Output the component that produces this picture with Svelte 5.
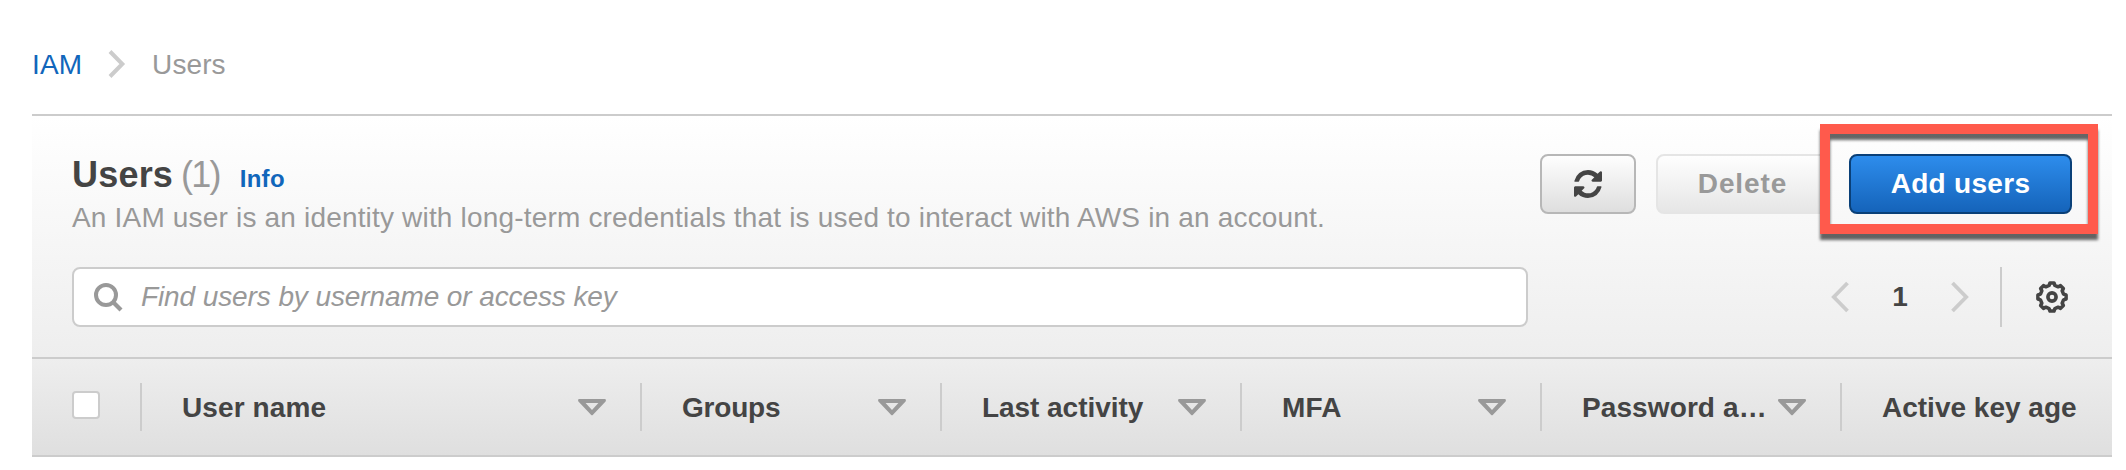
<script>
  const columns = [
    { label: 'User name', width: 500, sortable: true, spacing: 0.1 },
    { label: 'Groups', width: 300, sortable: true, spacing: -0.2 },
    { label: 'Last activity', width: 300, sortable: true, spacing: -0.05 },
    { label: 'MFA', width: 300, sortable: true, spacing: 0.2 },
    { label: 'Password a…', width: 300, sortable: true, spacing: 0.1 },
    { label: 'Active key age', width: 272, sortable: false, spacing: 0 }
  ];

  // Eight-toothed gear outline centred on the origin.
  const gear = Array.from({ length: 8 }, (_, k) =>
    [[-14, 11.9], [-8, 14.2], [8, 14.2], [14, 11.9]].map(([offset, radius]) => {
      const a = ((k * 45 + offset) * Math.PI) / 180;
      return `${(radius * Math.sin(a)).toFixed(2)},${(-radius * Math.cos(a)).toFixed(2)}`;
    }).join(' ')
  ).join(' ');
</script>

<nav class="crumbs">
  <a href="#iam">IAM</a>
  <svg width="18" height="30" viewBox="0 0 18 30"><path d="M2 2.5 14.3 15 2 27.5" fill="none" stroke="#ccc" stroke-width="4" /></svg>
  <span>Users</span>
</nav>

<section class="panel">
  <header class="top">
    <div class="title-row">
      <div class="titles">
        <h1><span class="name">Users</span><span class="count">(1)</span><a class="info" href="#info">Info</a></h1>
        <p>An IAM user is an identity with long-term credentials that is used to interact with AWS in an account.</p>
      </div>
      <div class="actions">
        <button class="btn refresh" aria-label="Refresh">
          <svg width="28" height="28" viewBox="128 128 1536 1536"><path fill="#444" d="M1639 1056q0 5-1 7-64 268-268 434.5t-478 166.5q-146 0-282.5-55t-243.5-157l-129 129q-19 19-45 19t-45-19-19-45v-448q0-26 19-45t45-19h448q26 0 45 19t19 45-19 45l-137 137q71 66 161 102t187 36q134 0 250-65t186-179q11-17 53-117 8-23 30-23h192q13 0 22.5 9.5t9.5 22.5zm25-800v448q0 26-19 45t-45 19h-448q-26 0-45-19t-19-45 19-45l138-138q-148-137-349-137-134 0-250 65t-186 179q-11 17-53 117-8 23-30 23h-199q-13 0-22.5-9.5t-9.5-22.5v-7q65-268 270-434.5t480-166.5q146 0 284 55.5t245 156.5l130-129q19-19 45-19t45 19 19 45z" /></svg>
        </button>
        <button class="btn delete" disabled>Delete</button>
        <div class="highlighted">
          <button class="btn primary">Add users</button>
          <div class="frame"></div>
        </div>
      </div>
    </div>

    <div class="filter-row">
      <div class="search">
        <svg width="32" height="32" viewBox="0 0 32 32" fill="none" stroke="#999"><circle cx="14" cy="14" r="10" stroke-width="4" /><path d="M20.5 20.5 29 29" stroke-width="4.2" /></svg>
        <span>Find users by username or access key</span>
      </div>
      <div class="pager">
        <svg width="18" height="32" viewBox="0 0 18 32"><path d="M16.5 2 2.8 16 16.5 30" fill="none" stroke="#ccc" stroke-width="3.8" /></svg>
        <span class="page">1</span>
        <svg width="18" height="32" viewBox="0 0 18 32"><path d="M1.5 2 15.2 16 1.5 30" fill="none" stroke="#ccc" stroke-width="3.8" /></svg>
        <i class="rule"></i>
        <svg width="32" height="32" viewBox="-16 -16 32 32" fill="none" stroke="#444" stroke-width="3.6" stroke-linejoin="round"><polygon points={gear} /><circle r="4.1" /></svg>
      </div>
    </div>
  </header>

  <div class="columns">
    <div class="select"><span class="checkbox"></span></div>
    {#each columns as column}
      <div class="column" style="width:{column.width}px">
        <span style="letter-spacing:{column.spacing}px">{column.label}</span>
        {#if column.sortable}
          <svg width="28" height="17" viewBox="0 0 28 17"><path fill="#999" fill-rule="evenodd" d="M.8 0H27.2Q28.6 1 27.6 2.4L15 15.8Q14 16.8 13 15.8L.4 2.4Q-.6 1 .8 0ZM7.6 4 14 11 20.4 4Z" /></svg>
        {/if}
      </div>
    {/each}
  </div>
</section>

<style>
  :global(body) {
    margin: 0;
    background: #fff;
    color: #444;
    font: 28px/36px "Liberation Sans", Arial, sans-serif;
  }
  svg { display: block; flex: none; overflow: visible; }
  a { color: #1166bb; text-decoration: none; }

  .crumbs {
    display: flex;
    align-items: center;
    box-sizing: border-box;
    height: 114px;
    padding: 14px 0 0 32px;
    letter-spacing: 0.1px;
    color: #999;
  }
  .crumbs a, .crumbs span { padding-top: 1px; }
  .crumbs svg { margin: 0 26px 0 26px; }

  .panel {
    margin: 0 14px 0 32px;
    border-top: 2px solid #ccc;
    border-bottom: 2px solid #ccc;
  }
  .top {
    box-sizing: border-box;
    height: 241px;
    padding: 38px 40px 0;
    background: linear-gradient(#fff, #eee);
  }
  .title-row { display: flex; justify-content: space-between; height: 113px; }
  .titles { white-space: nowrap; }
  h1 { display: flex; align-items: baseline; margin: 0; font-size: 36px; line-height: 41px; }
  .name { letter-spacing: 0.2px; }
  .count { margin-left: 8px; font-weight: 400; letter-spacing: -1.8px; color: #999; }
  .info { margin-left: 20px; font-size: 24px; letter-spacing: 0.3px; }
  p { margin: 1px 0 0; color: #999; letter-spacing: 0.18px; }

  .actions { display: flex; gap: 20px; height: 60px; }
  .btn {
    display: flex;
    align-items: center;
    justify-content: center;
    box-sizing: border-box;
    height: 60px;
    padding: 0;
    border: 2px solid #b7b7b7;
    border-radius: 8px;
    font: bold 28px/36px "Liberation Sans", Arial, sans-serif;
    color: #444;
    background: linear-gradient(#fff, #ddd) border-box;
  }
  .refresh { width: 96px; }
  .delete {
    width: 173px;
    border-color: #e5e5e5;
    letter-spacing: 0.9px;
    color: #999;
    background: linear-gradient(#fff, #e5e5e5) border-box;
  }
  .primary {
    width: 223px;
    border-color: #0a4078;
    letter-spacing: 0.3px;
    color: #fff;
    background: linear-gradient(#2e8eee, #1462b8) border-box;
  }
  .highlighted { position: relative; }
  .frame {
    position: absolute;
    inset: -30px -26px -20px -29px;
    border: 10px solid #ff5a4c;
    filter: drop-shadow(0 6px 1.4px rgba(0, 0, 0, 0.6));
  }

  .filter-row { display: flex; justify-content: space-between; height: 60px; }
  .search {
    display: flex;
    align-items: center;
    box-sizing: border-box;
    width: 1456px;
    padding-left: 18px;
    border: 2px solid #ccc;
    border-radius: 8px;
    background: #fff;
    font-style: italic;
    letter-spacing: -0.1px;
    color: #999;
  }
  .search svg { margin: 0 17px 0 0; }
  .pager { display: flex; align-items: center; margin-right: 4px; font-weight: 700; }
  .page { width: 102px; text-align: center; }
  .rule { width: 2px; height: 60px; margin: 0 34px 0 31px; background: #ccc; }

  .columns {
    display: flex;
    align-items: center;
    height: 96px;
    border-top: 2px solid #ccc;
    background: linear-gradient(#eee, #dfdfdf);
    font-weight: 700;
    white-space: nowrap;
  }
  .select { flex: none; width: 68px; padding-left: 40px; }
  .checkbox {
    display: block;
    box-sizing: border-box;
    width: 28px;
    height: 28px;
    margin-top: -4px;
    border: 2px solid #ccc;
    border-radius: 4px;
    background: #fff;
  }
  .column {
    display: flex;
    flex: none;
    align-items: center;
    justify-content: space-between;
    box-sizing: border-box;
    height: 48px;
    padding: 0 34px 0 40px;
    border-left: 2px solid #ccc;
  }
  .column span { padding-top: 1px; }
</style>
